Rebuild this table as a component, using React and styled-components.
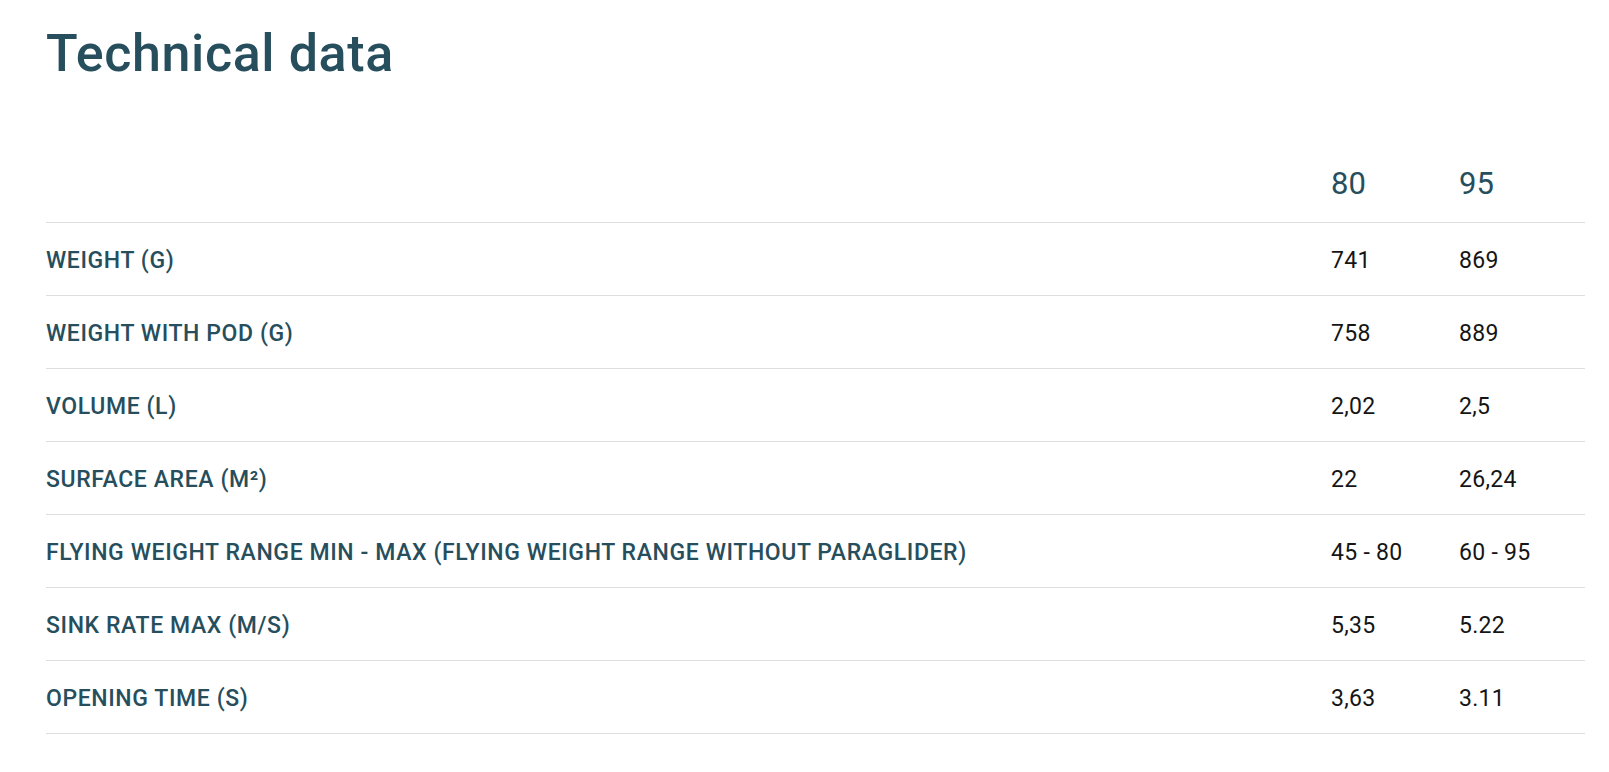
import React from 'react';
import styled, { createGlobalStyle } from 'styled-components';

const GlobalStyle = createGlobalStyle`
  html, body {
    margin: 0;
    padding: 0;
    background: #ffffff;
  }
  body {
    font-family: Roboto, "Liberation Sans", sans-serif;
  }
`;

const sizes = ['80', '95'];

const rows = [
  { label: 'WEIGHT (G)', values: ['741', '869'] },
  { label: 'WEIGHT WITH POD (G)', values: ['758', '889'] },
  { label: 'VOLUME (L)', values: ['2,02', '2,5'] },
  { label: 'SURFACE AREA (M²)', values: ['22', '26,24'] },
  {
    label: 'FLYING WEIGHT RANGE MIN - MAX (FLYING WEIGHT RANGE WITHOUT PARAGLIDER)',
    values: ['45 - 80', '60 - 95'],
  },
  { label: 'SINK RATE MAX (M/S)', values: ['5,35', '5.22'] },
  { label: 'OPENING TIME (S)', values: ['3,63', '3.11'] },
];

const App = () => {
  return (
    <>
      <GlobalStyle />
      <Section>
        <Title>Technical data</Title>
        <Table>
          <HeaderRow>
            <span />
            {sizes.map((size) => (
              <SizeCell key={size}>{size}</SizeCell>
            ))}
          </HeaderRow>
          {rows.map((row) => (
            <Row key={row.label}>
              <Label>{row.label}</Label>
              {row.values.map((value, i) => (
                <Value key={i}>{value}</Value>
              ))}
            </Row>
          ))}
        </Table>
      </Section>
    </>
  );
};

export default App;

const Section = styled.section`
  padding: 28px 24px 40px 46px;
`;

const Title = styled.h2`
  margin: 0;
  font-family: Roboto, "Liberation Sans", sans-serif;
  font-size: 52px;
  line-height: 52px;
  font-weight: 500;
  letter-spacing: 0.6px;
  color: #264e5c;
`;

const Table = styled.div`
  display: flex;
  flex-direction: column;
  margin-top: 70px;
`;

const Row = styled.div`
  display: grid;
  grid-template-columns: 1fr 128px 126px;
  align-items: center;
  box-sizing: border-box;
  height: 73px;
  padding-top: 3px;
  border-bottom: 1px solid #dedede;
`;

const HeaderRow = styled(Row)`
  padding-top: 0;
  padding-bottom: 5px;
`;

const SizeCell = styled.span`
  font-size: 31px;
  font-weight: 400;
  color: #264e5c;
`;

const Label = styled.span`
  font-size: 23px;
  font-weight: 500;
  letter-spacing: 0.6px;
  color: #264e5c;
`;

const Value = styled.span`
  font-size: 23px;
  font-weight: 400;
  letter-spacing: 0.3px;
  color: #151515;
`;
